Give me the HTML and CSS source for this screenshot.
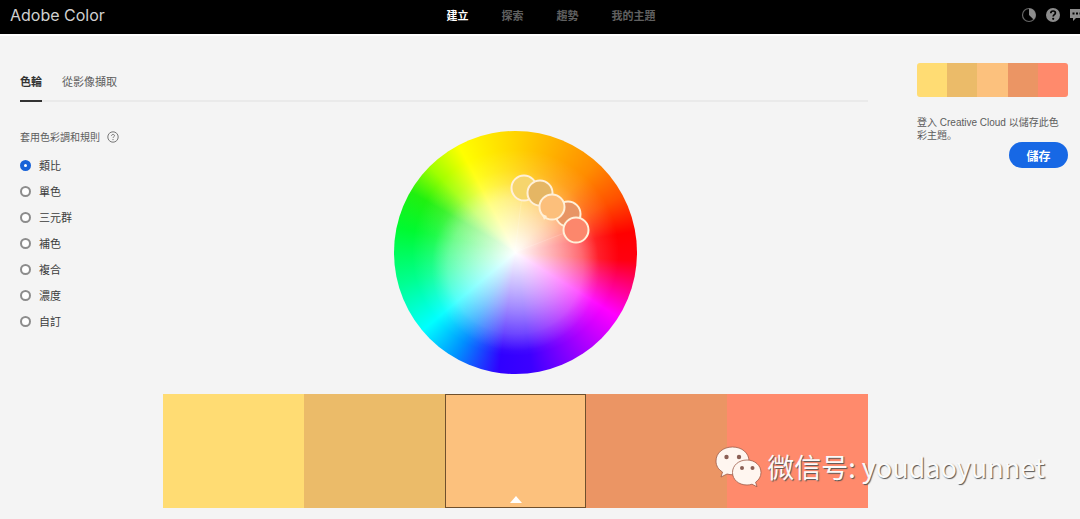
FILE: index.html
```
<!DOCTYPE html>
<html lang="zh-Hant">
<head>
    <meta charset="UTF-8">
    <meta name="viewport" content="width=device-width, initial-scale=1.0">
    <title>Adobe Color</title>
    <link rel="stylesheet" href="styles.css">
</head>
<body>
    <header class="header">
        <a href="#" class="logo">Adobe Color</a>
        <nav class="nav">
            <a href="#" class="active">建立</a>
            <a href="#">探索</a>
            <a href="#">趨勢</a>
            <a href="#">我的主題</a>
        </nav>
        <div class="header-icons">
            <button aria-label="Contrast">
                <svg width="16" height="16" viewBox="0 0 16 16"><circle cx="8" cy="8" r="6.5" fill="none" stroke="#666" stroke-width="1.2"/><path d="M8 1.5a6.5 6.5 0 0 1 4.6 11.1L8 8z" fill="#8c8c8c"/></svg>
            </button>
            <button aria-label="Help">
                <svg width="16" height="16" viewBox="0 0 16 16"><circle cx="8" cy="8" r="7" fill="#8c8c8c"/><path d="M5.8 6.2c0-3 4.6-2.8 4.6-.2 0 1.7-2.2 1.7-2.2 3.5" fill="none" stroke="#000" stroke-width="1.7"/><circle cx="8.2" cy="11.8" r="1.1" fill="#000"/></svg>
            </button>
            <button aria-label="Feedback">
                <svg width="16" height="16" viewBox="0 0 16 16"><path d="M1 2h14v9H7l-3 3v-3H1z" fill="#8c8c8c"/><path d="M3.5 6.5h2M7 6.5h2M10.5 6.5h2" stroke="#000" stroke-width="2"/></svg>
            </button>
        </div>
    </header>
    <div class="container">
        <main class="main">
            <nav class="tabs">
                <a href="#" class="active">色輪</a>
                <a href="#">從影像擷取</a>
            </nav>
            <div class="workspace">
                <fieldset class="rules">
                    <legend>套用色彩調和規則
                        <svg width="12" height="12" viewBox="0 0 12 12"><circle cx="6" cy="6" r="5.2" fill="none" stroke="#777"/><path d="M4.5 4.9c0-2 3-1.9 3-.2 0 1.1-1.5 1.1-1.5 2.2" fill="none" stroke="#777"/><circle cx="6" cy="8.6" r=".7" fill="#777"/></svg>
                    </legend>
                    <label><input type="radio" name="rule" checked>類比</label>
                    <label><input type="radio" name="rule">單色</label>
                    <label><input type="radio" name="rule">三元群</label>
                    <label><input type="radio" name="rule">補色</label>
                    <label><input type="radio" name="rule">複合</label>
                    <label><input type="radio" name="rule">濃度</label>
                    <label><input type="radio" name="rule">自訂</label>
                </fieldset>
                <div class="editor">
                    <div class="wheel">
                        <svg class="markers" viewBox="0 0 243 243">
                            <path d="M121 121L129 57M121 121L181 98" stroke="#fff" stroke-opacity=".15"/>
                            <g stroke="#fff0d8" stroke-width="2">
                                <circle cx="130" cy="57" r="12.5" fill="#f6d56c"/>
                                <circle cx="146" cy="62" r="12.5" fill="#e5b664"/>
                                <circle cx="174" cy="83" r="12.5" fill="#e89564"/>
                                <circle cx="158" cy="76" r="12.5" fill="#fcbf7b"/>
                                <circle cx="182" cy="99" r="12.5" fill="#fc876c"/>
                            </g>
                            <path d="M148 83l5 2-3 4z" fill="#fff0d8"/>
                        </svg>
                    </div>
                    <div class="swatches">
                        <button class="yellow" aria-label="#FFDC73"></button>
                        <button class="gold" aria-label="#EBBB69"></button>
                        <button class="peach selected" aria-label="#FCC17D"></button>
                        <button class="orange" aria-label="#EB9564"></button>
                        <button class="coral" aria-label="#FF8A6C"></button>
                    </div>
                </div>
            </div>
        </main>
        <aside class="sidebar">
            <div class="preview">
                <span class="yellow"></span>
                <span class="gold"></span>
                <span class="peach"></span>
                <span class="orange"></span>
                <span class="coral"></span>
            </div>
            <p lang="zh-Hans">登入 Creative Cloud 以儲存此色彩主題。</p>
            <button class="save">儲存</button>
        </aside>
    </div>
    <div class="watermark">
        <svg width="48" height="42" viewBox="0 0 48 42">
            <g fill="#fff6f0" stroke="#9c5a48" stroke-width=".8">
                <path d="M17.5 1C8 1 1 7 1 15c0 5 2.500 8.500 6.500 11L6 31l6-3c2 .6 4 .8 6 .8C27 28.8 34 23 34 15S27 1 17.5 1z"/>
                <path d="M32 14c-8.500 0-14.500 5.500-14.500 12.500S23.500 39 32 39c2 0 3.500-.3 5-.8l5 2.600-1.400-4.600c3.400-2.300 5.400-5.700 5.400-9.700C46 19.500 40 14 32 14z"/>
            </g>
            <g fill="#8b5f55"><circle cx="11.5" cy="11" r="2.2"/><circle cx="24" cy="11" r="2.2"/><circle cx="27" cy="22" r="2"/><circle cx="37.5" cy="22" r="2"/></g>
        </svg>
        <span>微信号: youdaoyunnet</span>
    </div>
</body>
</html>
```
FILE: styles.css
```
* {
    box-sizing: border-box;
}
body {
    font-family: "Noto Sans CJK TC", sans-serif;
    font-size: 11px;
    margin: 0;
    background-color: #f4f4f4;
    color: #3c3c3c;
    position: relative;
    min-height: 100vh;
    overflow-x: hidden;
}
a {
    color: inherit;
    text-decoration: none;
}
button {
    font-family: inherit;
    border: none;
    padding: 0;
    cursor: pointer;
}
.header {
    display: grid;
    grid-template-columns: 1fr auto 1fr;
    align-items: center;
    height: 34px;
    padding-bottom: 5px;
    background-color: #000;
    overflow: hidden;
}
.logo {
    padding-left: 10px;
    font-family: Inter, sans-serif;
    font-size: 16px;
    line-height: 24px;
    color: #d0d0d0;
}
.nav {
    display: flex;
    gap: 33px;
    padding-left: 22px;
    font-weight: bold;
    color: #606060;
}
.nav .active {
    color: #fff;
}
.header-icons {
    display: flex;
    justify-content: flex-end;
    gap: 8px;
    margin-right: -5px;
}
.header-icons button {
    background: none;
    height: 16px;
}
.container {
    display: grid;
    grid-template-columns: 1fr 212px;
    border-top: 2px solid #fff;
}
.main {
    padding-left: 20px;
}
.tabs {
    display: flex;
    gap: 20px;
    margin-top: 35px;
    border-bottom: 2px solid #eaeaea;
    color: #5c5c5c;
}
.tabs a {
    line-height: 20px;
    padding-bottom: 9px;
    margin-bottom: -2px;
    border-bottom: 2px solid transparent;
}
.tabs .active {
    color: #323232;
    font-weight: bold;
    border-color: #323232;
}
.workspace {
    display: grid;
    grid-template-columns: 143px 1fr;
    padding-top: 29px;
}
.rules {
    border: none;
    margin: 0;
    padding: 0;
}
.rules legend {
    display: flex;
    align-items: center;
    gap: 7px;
    padding: 0;
    margin-bottom: 14px;
    font-size: 10px;
    line-height: 12px;
    color: #5c5c5c;
}
.rules label {
    display: flex;
    align-items: center;
    gap: 8px;
    height: 16px;
    margin-bottom: 10px;
}
.rules input {
    appearance: none;
    width: 11px;
    height: 11px;
    margin: 0;
    border: 2px solid #8c8c8c;
    border-radius: 50%;
    background-color: #fff;
}
.rules input:checked {
    border: 4px solid #1762d8;
}
.wheel {
    width: 243px;
    height: 243px;
    margin: 0 auto 20px;
    border-radius: 50%;
    background:
        radial-gradient(circle 84px at 50% 56%, rgba(255, 255, 255, 0.3) 0%, rgba(255, 255, 255, 0.16) 80%, transparent 100%),
        radial-gradient(closest-side, #fff 0%, rgba(255, 255, 255, 0.72) 20%, rgba(255, 255, 255, 0.42) 45%, rgba(255, 255, 255, 0.12) 68%, transparent 85%),
        conic-gradient(#ffd400, #ff8c00 42deg, #ff5000 62deg, #ff0000 80deg, #ff0010 94deg, #ff00ff 122deg, #9000ff 150deg, #3c00ff 172deg, #3000ff 188deg, #0090ff 210deg, #00ffff 230deg, #00ff90 255deg, #00fa30 282deg, #20f010 300deg, #a0ff00 315deg, #ffff00 332deg, #ffd400);
}
.markers {
    display: block;
    width: 100%;
}
.swatches {
    display: grid;
    grid-template-columns: repeat(5, 1fr);
    height: 114px;
}
.swatches .selected {
    display: flex;
    align-items: flex-end;
    justify-content: center;
    padding-bottom: 4px;
    border: 1px solid #70502c;
}
.swatches .selected::after {
    content: "";
    border: 6px solid transparent;
    border-top: none;
    border-bottom: 7px solid #fff;
}
.yellow {
    background-color: #ffdc73;
}
.gold {
    background-color: #ebbb69;
}
.peach {
    background-color: #fcc17d;
}
.orange {
    background-color: #eb9564;
}
.coral {
    background-color: #ff8a6c;
}
.sidebar {
    padding: 27px 12px 0 49px;
}
.preview {
    display: grid;
    grid-template-columns: repeat(5, 1fr);
    height: 34px;
    border-radius: 3px;
    overflow: hidden;
}
.sidebar p {
    margin: 19px 0 0;
    font-family: "Liberation Sans", "Noto Sans CJK SC", sans-serif;
    font-size: 10px;
    line-height: 13px;
    color: #5c5c5c;
}
.save {
    display: block;
    width: 59px;
    height: 26px;
    margin: 0 0 0 auto;
    border-radius: 13px;
    background-color: #1768e5;
    color: #fff;
    font-size: 12px;
    font-weight: bold;
}
.watermark {
    position: absolute;
    right: 35px;
    bottom: 31px;
    display: flex;
    align-items: center;
    gap: 4px;
    font-family: "Noto Sans CJK SC", sans-serif;
    font-size: 27px;
    line-height: 42px;
    color: #fafafa;
    text-shadow: 1px 1px 1px #555;
}
```
